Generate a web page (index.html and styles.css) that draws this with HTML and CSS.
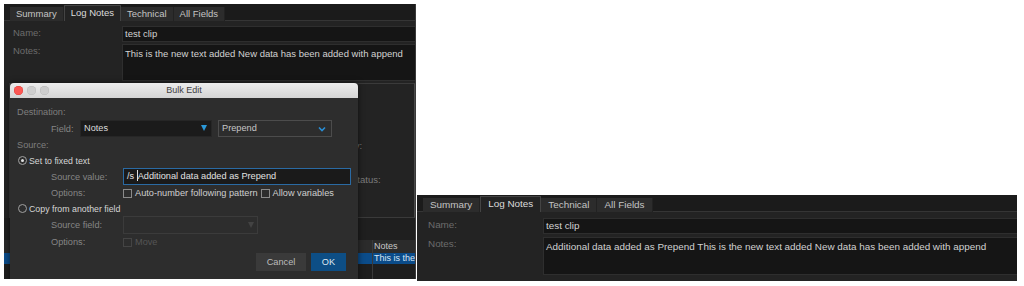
FILE: index.html
```html
<!DOCTYPE html>
<html lang="en">
  <head>
    <meta charset="UTF-8" />
    <meta name="viewport" content="width=device-width, initial-scale=1.0" />
    <title>Bulk Edit</title>
    <link rel="stylesheet" href="styles.css">
  </head>
  <body>
    <!-- before: clip inspector with the bulk edit dialog open -->
    <div class="shot shot-left">
      <div class="tabbar">
        <span class="tab">Summary</span>
        <span class="tab active">Log Notes</span>
        <span class="tab">Technical</span>
        <span class="tab">All Fields</span>
      </div>
      <div class="form">
        <span class="label">Name:</span>
        <div class="field">test clip</div>
        <span class="label">Notes:</span>
        <div class="field notes">This is the new text added New data has been added with append</div>
      </div>
      <div class="panel">
        <span class="hidden-label cat">Category:</span>
        <span class="hidden-label status">Status:</span>
      </div>
      <div class="list">
        <div class="list-gap"></div>
        <div class="list-head"><span class="col-name"></span><span class="col-notes">Notes</span></div>
        <div class="list-row selected"><span class="col-name"></span><span class="col-notes">This is the</span></div>
        <div class="list-row"><span class="col-name"></span><span class="col-notes"></span></div>
      </div>

      <div class="dialog">
        <div class="titlebar">
          <span class="light red"></span>
          <span class="light"></span>
          <span class="light"></span>
          <span class="title">Bulk Edit</span>
        </div>
        <div class="dialog-body">
          <div class="row section">Destination:</div>
          <div class="row indent r-field">
            <span class="dlabel short">Field:</span>
            <div class="combo dark">Notes<span class="tri"></span></div>
            <div class="combo outline">Prepend
              <svg class="chev" width="8" height="6" viewBox="0 0 8 6"><polyline points="1,1.5 4,4.5 7,1.5" fill="none" stroke="#2a8fd6" stroke-width="1.6"/></svg>
            </div>
          </div>
          <div class="row section">Source:</div>
          <div class="row radio-row"><span class="radio on"></span>Set to fixed text</div>
          <div class="row indent r-value">
            <span class="dlabel">Source value:</span>
            <div class="textfield">/s <span class="caret"></span>Additional data added as Prepend</div>
          </div>
          <div class="row indent">
            <span class="dlabel">Options:</span>
            <span class="check"></span><span class="opt">Auto-number following pattern</span>
            <span class="check"></span><span class="opt">Allow variables</span>
          </div>
          <div class="row radio-row"><span class="radio"></span>Copy from another field</div>
          <div class="row indent r-srcfield">
            <span class="dlabel">Source field:</span>
            <div class="combo disabled"><span class="tri dim"></span></div>
          </div>
          <div class="row indent">
            <span class="dlabel">Options:</span>
            <span class="check dim"></span><span class="opt dim">Move</span>
          </div>
          <div class="buttons">
            <span class="btn">Cancel</span>
            <span class="btn primary">OK</span>
          </div>
        </div>
      </div>
    </div>

    <!-- after: notes field with the prepended text -->
    <div class="shot shot-right">
      <div class="tabbar">
        <span class="tab">Summary</span>
        <span class="tab active">Log Notes</span>
        <span class="tab">Technical</span>
        <span class="tab">All Fields</span>
      </div>
      <div class="form">
        <span class="label">Name:</span>
        <div class="field">test clip</div>
        <span class="label">Notes:</span>
        <div class="field notes">Additional data added as Prepend This is the new text added New data has been added with append</div>
      </div>
    </div>
  </body>
</html>
```

FILE: styles.css
```css
body {
  margin: 0;
  width: 1024px;
  height: 286px;
  overflow: hidden;
  background: #ffffff;
  display: flex;
  align-items: flex-start;
  font-family: "Liberation Sans", Arial, sans-serif;
  font-size: 9.5px;
}
.shot {
  background: #232323;
  color: #d2d2d2;
  box-sizing: border-box;
}
.shot-left {
  position: relative;
  width: 412px;
  height: 275px;
  margin: 4px 0 0 4px;
  overflow: hidden;
  border-right: 1px solid #3a3a3a;
}
.shot-right {
  width: 600px;
  height: 86px;
  margin: 195px 0 0 1px;
  font-size: 9.9px;
}
.tabbar {
  height: 17px;
  box-sizing: border-box;
  background: #1b1b1b;
  display: flex;
  align-items: flex-end;
  padding-left: 6px;
  border-bottom: 1px solid #353535;
}
.tab {
  height: 14px;
  line-height: 14px;
  padding: 0 6px;
  background: #2c2c2c;
  color: #c4c4c4;
  margin-bottom: -1px;
  border-right: 1px solid #222;
}
.tab.active {
  background: #232323;
  border: 1px solid #444;
  border-bottom: none;
  height: 15px;
  padding: 0 6px;
  color: #dcdcdc;
}
.shot-right .tab {
  padding: 0 7px;
}
.form {
  display: grid;
  grid-template-columns: 118px 1fr;
  row-gap: 2px;
  padding-top: 5px;
}
.shot-right .form {
  grid-template-columns: 126px 1fr;
  padding-top: 6px;
  row-gap: 3px;
}
.label {
  padding-left: 9px;
  color: #6c6c6c;
  line-height: 14px;
}
.shot-right .label {
  padding-left: 11px;
}
.field {
  height: 16px;
  box-sizing: border-box;
  background: #151515;
  border: 1px solid #2e2e2e;
  border-right: none;
  padding-left: 2px;
  line-height: 14px;
  white-space: nowrap;
  overflow: hidden;
}
.field.notes {
  height: 37px;
  padding-top: 2px;
}
.shot-right .field.notes {
  height: 38px;
}
.panel {
  position: relative;
  height: 135px;
  margin: 2px 0 0 5px;
  border: 1px solid #3a3a3a;
  border-right-color: #4a4a4a;
  box-sizing: border-box;
}
.hidden-label {
  position: absolute;
  color: #7c7c7c;
}
.hidden-label.cat {
  left: 311px;
  top: 56px;
}
.hidden-label.status {
  left: 341px;
  top: 90px;
}
.list {
  font-size: 9px;
}
.list-gap {
  height: 22px;
  background: #1f1f1f;
}
.list-head,
.list-row {
  display: flex;
  height: 13px;
  line-height: 13px;
}
.list-head {
  background: #2b2b2b;
  color: #c8c8c8;
}
.list-row {
  height: 20px;
  background: #1e1e1e;
}
.list-row.selected {
  height: 11px;
  line-height: 11px;
  background: #0b4c8a;
  color: #d8e6f4;
}
.col-name {
  flex-shrink: 0;
  width: 368px;
  border-right: 1px solid #3a3a3a;
}
.col-notes {
  padding-left: 1px;
  white-space: nowrap;
}

/* dialog window lies over the inspector */
.dialog {
  position: absolute;
  left: 6px;
  top: 79px;
  width: 348px;
  height: 210px;
  background: #2d2d2d;
  border-radius: 4px 4px 0 0;
  box-shadow: 0 0 6px rgba(0, 0, 0, 0.6);
  color: #d4d4d4;
  font-size: 9.2px;
}
.titlebar {
  height: 15px;
  background: linear-gradient(#ececec, #d4d4d4);
  border-radius: 4px 4px 0 0;
  display: flex;
  align-items: center;
  padding-left: 4px;
  gap: 4px;
  position: relative;
}
.light {
  width: 9px;
  height: 9px;
  border-radius: 50%;
  background: #cdcdcd;
  box-shadow: inset 0 0 0 0.5px #b8b8b8;
}
.light.red {
  background: #fc5753;
  box-shadow: inset 0 0 0 0.5px #df3e3a;
}
.title {
  position: absolute;
  left: 0;
  right: 0;
  text-align: center;
  color: #404040;
  line-height: 15px;
  font-size: 9px;
}
.dialog-body {
  padding-top: 6px;
}
.row {
  display: flex;
  align-items: center;
  height: 16px;
  white-space: nowrap;
}
.section {
  padding-left: 7px;
  color: #7e7e7e;
}
.indent {
  padding-left: 41px;
}
.r-field {
  height: 17px;
}
.r-value {
  height: 17px;
}
.r-srcfield {
  height: 18px;
}
.radio-row {
  height: 15px;
  padding-left: 8px;
  color: #d6d6d6;
  font-size: 8.8px;
}
.dlabel {
  width: 72px;
  color: #858585;
}
.dlabel.short {
  width: 29px;
}
.combo {
  position: relative;
  height: 17px;
  line-height: 15px;
  box-sizing: border-box;
  padding-left: 3px;
}
.combo.dark {
  width: 132px;
  background: #1b1b1b;
  border: 1px solid #262626;
  color: #dadada;
}
.combo.outline {
  width: 114px;
  margin-left: 6px;
  border: 1px solid #4c4c4c;
  color: #c6c6c6;
}
.combo.disabled {
  width: 135px;
  height: 18px;
  border: 1px solid #3b3b3b;
}
.tri {
  position: absolute;
  right: 4px;
  top: 4px;
  width: 0;
  height: 0;
  border-left: 3px solid transparent;
  border-right: 3px solid transparent;
  border-top: 6px solid #2a98d8;
}
.tri.dim {
  border-top-color: #434343;
  right: 3px;
  top: 5px;
}
.chev {
  position: absolute;
  right: 5px;
  top: 5px;
}
.textfield {
  width: 228px;
  height: 17px;
  line-height: 15px;
  box-sizing: border-box;
  border: 1px solid #2a6aa3;
  background: #1a1a1a;
  padding-left: 3px;
  color: #e2e2e2;
}
.caret {
  display: inline-block;
  width: 1px;
  height: 11px;
  background: #e0e0e0;
  vertical-align: -2px;
}
.check {
  width: 9px;
  height: 9px;
  box-sizing: border-box;
  border: 1px solid #8a8a8a;
  margin-right: 3px;
}
.check.dim {
  border-color: #444;
}
.opt {
  color: #cfcfcf;
  margin-right: 3px;
}
.opt.dim {
  color: #555;
}
.radio {
  width: 9px;
  height: 9px;
  box-sizing: border-box;
  border: 1px solid #a0a0a0;
  border-radius: 50%;
  margin-right: 2px;
  display: flex;
  align-items: center;
  justify-content: center;
}
.radio.on::after {
  content: "";
  width: 3px;
  height: 3px;
  border-radius: 50%;
  background: #e0e0e0;
}
.buttons {
  display: flex;
  justify-content: flex-end;
  gap: 5px;
  padding-right: 12px;
  margin-top: 3px;
}
.btn {
  height: 18px;
  line-height: 18px;
  width: 50px;
  text-align: center;
  background: #3a3a3a;
  color: #bdbdbd;
}
.btn.primary {
  width: 35px;
  background: #0d4e85;
  color: #dfe8f0;
}
```
